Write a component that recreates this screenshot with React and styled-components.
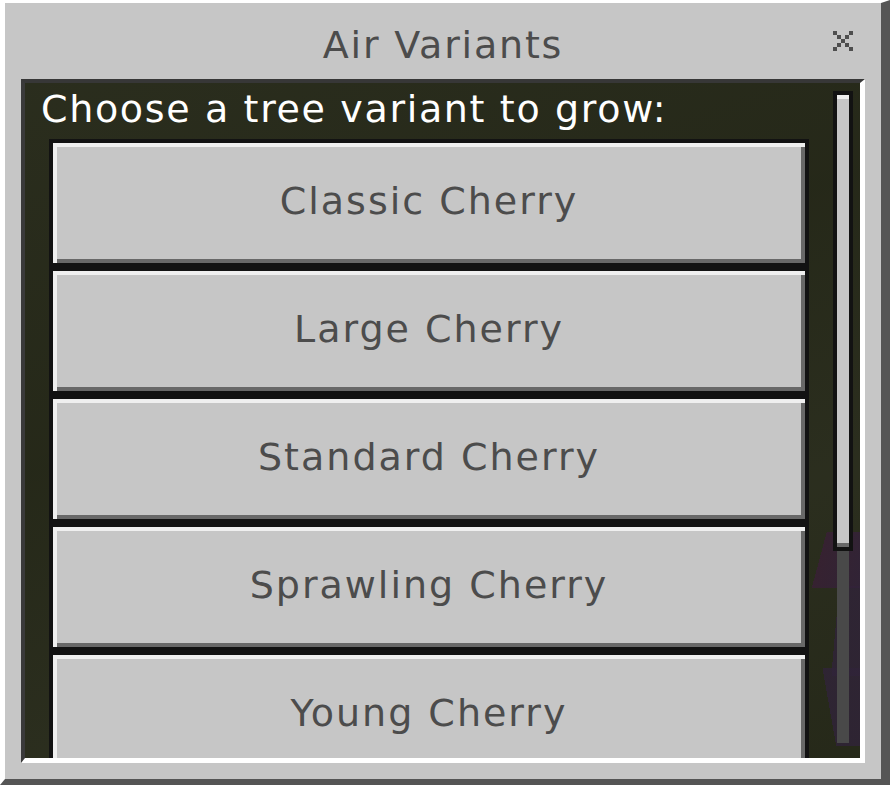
import React from "react";
import styled, { createGlobalStyle } from "styled-components";

const GlobalStyle = createGlobalStyle`
  html, body { margin: 0; padding: 0; background: #c6c6c6; }
  body { width: 890px; height: 785px; overflow: hidden; font-family: "DejaVu Sans", "Liberation Sans", sans-serif; }
  * { box-sizing: border-box; }
`;

const Window = styled.div`
  width: 890px;
  height: 785px;
  background: #c6c6c6;
  border-style: solid;
  border-width: 3px 9px 6px 5px;
  border-color: #ffffff #555555 #555555 #ffffff;
  display: flex;
  flex-direction: column;
  padding: 0 16px 16px 16px;
`;

const TitleBar = styled.div`
  height: 76px;
  flex-shrink: 0;
  display: grid;
  grid-template-columns: 1fr auto 1fr;
  align-items: start;
  padding-top: 23px;
`;

const Title = styled.div`
  grid-column: 2;
  font-size: 38px;
  line-height: 1;
  color: #4c4c4c;
  letter-spacing: 1.8px;
  white-space: nowrap;
`;

const CloseButton = styled.div`
  grid-column: 3;
  justify-self: end;
  margin-right: 12px;
  margin-top: 5px;
  width: 20px;
  height: 20px;
  display: flex;
`;

const InnerPanel = styled.div`
  flex: 1;
  min-height: 0;
  display: flex;
  overflow: hidden;
  border-style: solid;
  border-width: 4px 5px 5px 4px;
  border-color: #373737 #ffffff #ffffff #3a3a3a;
  background:
    linear-gradient(105deg, transparent 28%, rgba(56, 32, 52, 0.85) 28%, rgba(50, 34, 58, 0.85) 100%) right 0 top 449px / 52px 56px no-repeat,
    linear-gradient(95deg, transparent 20%, rgba(48, 35, 57, 0.8) 20%) right 0 top 503px / 28px 90px no-repeat,
    linear-gradient(80deg, transparent 35%, rgba(48, 35, 57, 0.8) 35%) right 0 top 585px / 44px 78px no-repeat,
    linear-gradient(160deg, rgba(255, 255, 255, 0.015) 0%, rgba(0, 0, 0, 0.04) 40%, rgba(255, 255, 255, 0.02) 70%, rgba(0, 0, 0, 0.03) 100%),
    #272a1a;
`;

const MainColumn = styled.div`
  flex: 1;
  min-width: 0;
  display: flex;
  flex-direction: column;
  padding-left: 16px;
  overflow: hidden;
`;

const Prompt = styled.div`
  height: 56px;
  flex-shrink: 0;
  padding-top: 7px;
  font-size: 38px;
  line-height: 1;
  color: #ffffff;
  letter-spacing: 1.65px;
  white-space: nowrap;
`;

const ButtonList = styled.div`
  display: flex;
  flex-direction: column;
  padding-left: 8px;
  flex-shrink: 0;
`;

const OptionButton = styled.div`
  width: 760px;
  height: 128px;
  flex-shrink: 0;
  border: 4px solid #121212;
  background: #c6c6c6;
  box-shadow: inset 4px 4px 0 #efefef, inset -4px -4px 0 #686868;
  display: flex;
  align-items: center;
  justify-content: center;
  padding-bottom: 4px;
  font-size: 38px;
  line-height: 1;
  color: #4c4c4c;
  letter-spacing: 2px;
  white-space: nowrap;
`;

const Scrollbar = styled.div`
  width: 20px;
  height: 652px;
  flex-shrink: 0;
  margin: 8px 7px 0 24px;
  background: linear-gradient(#494949, #494949) no-repeat;
  background-position: 4px 4px;
  background-size: 12px calc(100% - 4px);
`;

const Thumb = styled.div`
  height: 460px;
  border: 4px solid #121212;
  background: #c6c6c6;
  box-shadow: inset 0 4px 0 #efefef, inset 0 -4px 0 #686868;
`;

const CloseIcon = () => (
  <svg width="20" height="20" viewBox="0 0 5 5" shapeRendering="crispEdges">
    {[
      [0, 0], [4, 0], [1, 1], [3, 1], [2, 2], [1, 3], [3, 3], [0, 4], [4, 4],
    ].map(([x, y]) => (
      <rect key={`${x}-${y}`} x={x} y={y} width="1" height="1" fill="#4e4e4e" />
    ))}
  </svg>
);

const variants = [
  "Classic Cherry",
  "Large Cherry",
  "Standard Cherry",
  "Sprawling Cherry",
  "Young Cherry",
];

export default function App() {
  return (
    <>
      <GlobalStyle />
      <Window>
        <TitleBar>
          <Title>Air Variants</Title>
          <CloseButton>
            <CloseIcon />
          </CloseButton>
        </TitleBar>
        <InnerPanel>
          <MainColumn>
            <Prompt>Choose a tree variant to grow:</Prompt>
            <ButtonList>
              {variants.map((v) => (
                <OptionButton key={v}>{v}</OptionButton>
              ))}
            </ButtonList>
          </MainColumn>
          <Scrollbar>
            <Thumb />
          </Scrollbar>
        </InnerPanel>
      </Window>
    </>
  );
}
